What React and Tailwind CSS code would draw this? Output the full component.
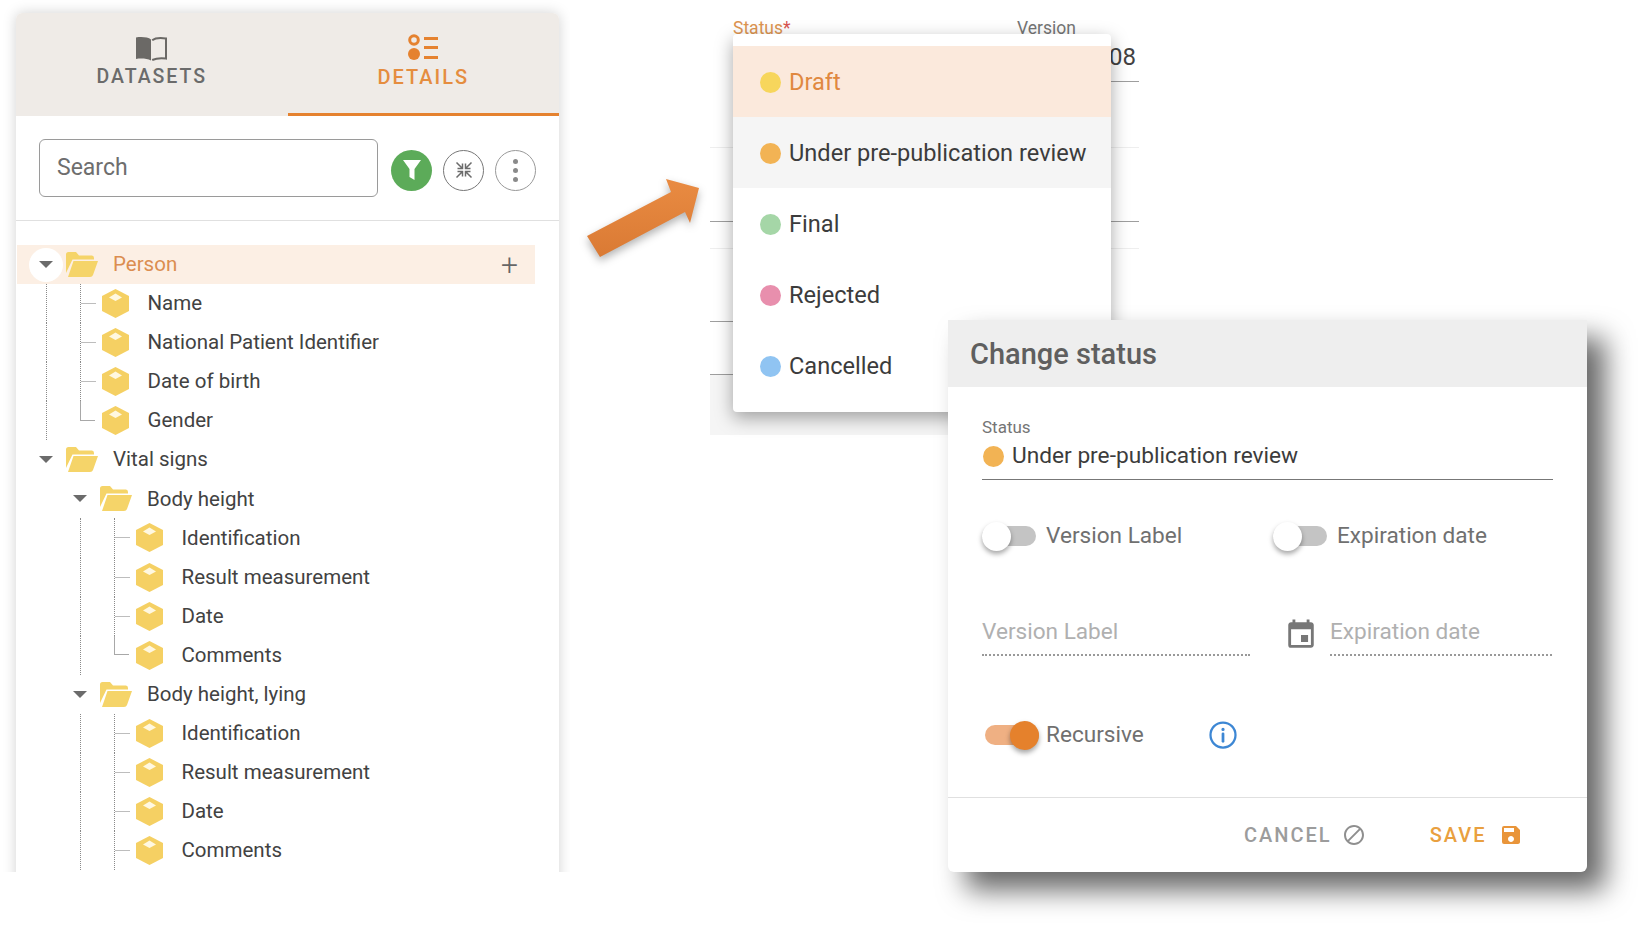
import { MdBlock, MdEvent, MdSave } from "react-icons/md"

const tree = [
    { label: "Person", kind: "folder", depth: 0, active: true },
    { label: "Name", kind: "leaf", guides: ["line", "elbow"] },
    { label: "National Patient Identifier", kind: "leaf", guides: ["line", "elbow"] },
    { label: "Date of birth", kind: "leaf", guides: ["line", "elbow"] },
    { label: "Gender", kind: "leaf", guides: ["line", "last"] },
    { label: "Vital signs", kind: "folder", depth: 0 },
    { label: "Body height", kind: "folder", depth: 1 },
    { label: "Identification", kind: "leaf", guides: ["none", "line", "elbow"] },
    { label: "Result measurement", kind: "leaf", guides: ["none", "line", "elbow"] },
    { label: "Date", kind: "leaf", guides: ["none", "line", "elbow"] },
    { label: "Comments", kind: "leaf", guides: ["none", "line", "last"] },
    { label: "Body height, lying", kind: "folder", depth: 1 },
    { label: "Identification", kind: "leaf", guides: ["none", "line", "elbow"] },
    { label: "Result measurement", kind: "leaf", guides: ["none", "line", "elbow"] },
    { label: "Date", kind: "leaf", guides: ["none", "line", "elbow"] },
    { label: "Comments", kind: "leaf", guides: ["none", "line", "elbow"] },
]

const statuses = [
    { label: "Draft", dot: "bg-[#f7d65c]", row: "bg-[#fbe9dc] text-[#e0883f]" },
    { label: "Under pre-publication review", dot: "bg-[#f2b354]", row: "bg-[#f5f5f5] text-[#3c3c3c]" },
    { label: "Final", dot: "bg-[#a5d6a7]", row: "text-[#3c3c3c]" },
    { label: "Rejected", dot: "bg-[#e88fad]", row: "text-[#3c3c3c]" },
    { label: "Cancelled", dot: "bg-[#90c4f2]", row: "text-[#3c3c3c]" },
]

function BookIcon() {
    return (
        <svg width="33" height="25" viewBox="0 0 33 25">
            <path d="M16 3.5C13 1 6 .5 1 1.5V23c5-1 11-.5 15 1.5z" fill="#6b6966" />
            <path d="M17.200 4.200C20 2 26 1.600 31 2.400V22.600C26 22 21 22.400 17.200 24" fill="none" stroke="#6b6966" strokeWidth="2" />
        </svg>
    )
}

function DetailsIcon() {
    return (
        <svg width="31" height="26" viewBox="0 0 31 26" fill="#e5822f">
            <circle cx="6" cy="6" r="4.300" fill="none" stroke="#e5822f" strokeWidth="3" />
            <circle cx="6" cy="20" r="6" />
            <rect x="16" y="3" width="14" height="3" />
            <rect x="16" y="12" width="14" height="3" />
            <rect x="16" y="22" width="14" height="3" />
        </svg>
    )
}

function FolderIcon() {
    return (
        <svg width="32" height="25" viewBox="0 0 32 25" fill="#f5d469">
            <path d="M0 2.500Q0 0 2.500 0H10l3 3.500h13Q28 3.500 28 6v1.500H6.500L0 21z" />
            <path d="M7.500 9H32l-5 14q-.6 2-3 2H2z" />
        </svg>
    )
}

function CubeIcon() {
    return (
        <svg width="27" height="29" viewBox="0 0 27 29">
            <path d="M13.500 0 27 7v15l-13.500 7L0 22V7z" fill="#f5d063" />
            <path d="M13.500 4.500 20 8.500l-6.500 3.500L7 8.500z" fill="#fff8e1" />
        </svg>
    )
}

function CollapseIcon() {
    return (
        <svg width="18" height="18" viewBox="0 0 18 18" fill="none" stroke="#6b6b6b" strokeWidth="1.500">
            <path d="M7.500 2.500v5h-5M1.500 1.500l6 6" />
            <path d="M10.500 2.500v5h5M16.500 1.500l-6 6" />
            <path d="M7.500 15.500v-5h-5M1.500 16.500l6-6" />
            <path d="M10.500 15.500v-5h5M16.500 16.500l-6-6" />
        </svg>
    )
}

function TreeGuide({ type }) {
    if (type === "none") return <div className="w-[34px] self-stretch" />
    if (type === "line") return <div className="w-[34px] self-stretch border-l border-dotted border-[#8a8a8a]" />
    if (type === "elbow") {
        return (
            <div className="w-[22px] self-stretch flex items-center border-l border-dotted border-[#8a8a8a]">
                <div className="w-[15px] h-px bg-[#bdbdbd]" />
            </div>
        )
    }
    return (
        <div className="w-[22px] self-stretch flex flex-col">
            <div className="h-1/2 w-[15px] border-l border-b border-[#a8a8a8]" />
        </div>
    )
}

function TreeRow({ item }) {
    if (item.kind === "leaf") {
        return (
            <div className="flex items-center h-[39.07px] pl-[29px]">
                {item.guides.map((guide, i) => <TreeGuide key={i} type={guide} />)}
                <CubeIcon />
                <span className="ml-[18.500px] text-[20.500px] text-[#424242]">{item.label}</span>
            </div>
        )
    }
    return (
        <div className={`flex items-center h-[39.07px] pl-[29px] mr-[24px] ${item.active ? "bg-[#fcefe4]" : ""}`}>
            {item.depth === 1 && <div className="w-[34px]" />}
            <div className={`-ml-[17px] w-[34px] h-[34px] rounded-full flex items-center justify-center shrink-0 ${item.active ? "bg-white" : ""}`}>
                <div className="w-0 h-0 border-x-[7px] border-x-transparent border-t-[7px] border-t-[#6b6b6b]" />
            </div>
            <div className="ml-[3px] flex"><FolderIcon /></div>
            <span className={`ml-[15px] text-[20.500px] ${item.active ? "text-[#db8d50]" : "text-[#424242]"}`}>{item.label}</span>
            {item.active && <span className="ml-auto mr-[17px] text-[30px] leading-none font-light text-[#666]">+</span>}
        </div>
    )
}

function DatasetPanel() {
    return (
        <div className="w-[570px] h-[872px] overflow-hidden pl-4 pt-[13px] shrink-0">
            <div className="w-[543px] h-[900px] bg-white rounded-t-md shadow-[0_0_14px_rgba(0,0,0,0.18)]">
                <div className="flex h-[103px] bg-[#efebe7] rounded-t-md">
                    <div className="flex-1 flex flex-col items-center pt-[23px]">
                        <BookIcon />
                        <span className="mt-[3px] text-[19.500px] leading-[26px] font-medium tracking-[2px] text-[#6b6b6b]">DATASETS</span>
                    </div>
                    <div className="flex-1 flex flex-col items-center pt-[21px] border-b-[3px] border-[#e5822f]">
                        <DetailsIcon />
                        <span className="mt-[4px] text-[20px] leading-[26px] font-medium tracking-[2px] text-[#e58d3f]">DETAILS</span>
                    </div>
                </div>
                <div className="flex items-center h-[105px] pt-[4px] pl-[23px] border-b border-[#e0e0e0]">
                    <input
                        className="w-[339px] h-[58px] border border-[#9a9a9a] rounded-md px-[17px] pb-[2px] text-[23px] outline-none placeholder-[#6e6e6e] -mt-[4px]"
                        placeholder="Search"
                    />
                    <button className="ml-[13px] w-[41px] h-[41px] rounded-full bg-[#5cab59] flex items-center justify-center">
                        <svg width="20" height="22" viewBox="0 0 20 22" fill="#fff"><path d="M1 1h18l-6.500 9v11l-5-3v-8z" /></svg>
                    </button>
                    <button className="ml-[11px] w-[41px] h-[41px] rounded-full border border-[#777] flex items-center justify-center">
                        <CollapseIcon />
                    </button>
                    <button className="ml-[11px] w-[41px] h-[41px] rounded-full border border-[#999] flex flex-col items-center justify-center gap-[4px]">
                        <span className="w-[5px] h-[5px] rounded-full bg-[#8a8a8a]" />
                        <span className="w-[5px] h-[5px] rounded-full bg-[#8a8a8a]" />
                        <span className="w-[5px] h-[5px] rounded-full bg-[#8a8a8a]" />
                    </button>
                </div>
                <div className="pt-[24px] pl-px">
                    {tree.map((item, i) => <TreeRow key={i} item={item} />)}
                </div>
            </div>
        </div>
    )
}

function BackgroundForm() {
    return (
        <div className="absolute left-[140px] top-0 w-[429px] h-[434px]">
            <div className="h-[82px] pt-[15px] border-b border-[#9e9e9e] ml-[23px]">
                <span className="text-[17.500px] text-[#dd9450]">Status<span className="text-[#d9534f]">*</span></span>
            </div>
            <div className="h-[66px] border-b border-[#eeeeee]" />
            <div className="h-[74px] border-b border-[#9e9e9e]" />
            <div className="h-[27px] border-b border-[#eeeeee]" />
            <div className="h-[73px] border-b border-[#9e9e9e]" />
            <div className="h-[53px] border-b border-[#9e9e9e]" />
            <div className="h-[60px] bg-[#f5f5f5]" />
        </div>
    )
}

function StatusMenu() {
    return (
        <div className="absolute left-[163px] top-[34px] w-[378px] h-[378px] pt-[12px] bg-white rounded-sm shadow-[0_6px_18px_rgba(0,0,0,0.35)]">
            {statuses.map((status) => (
                <div key={status.label} className={`flex items-center h-[71px] pl-[27px] pt-[2px] text-[23.600px] ${status.row}`}>
                    <span className={`w-[21px] h-[21px] rounded-full ${status.dot}`} />
                    <span className="ml-[8px]">{status.label}</span>
                </div>
            ))}
        </div>
    )
}

function Toggle({ on }) {
    return (
        <div className={`w-[54px] h-[20px] rounded-full flex items-center shrink-0 ${on ? "bg-[#efb083] justify-end" : "bg-[#c4c4c4]"}`}>
            <span className={`w-[29px] h-[29px] rounded-full shrink-0 shadow-[0_3px_5px_rgba(0,0,0,0.35)] ${on ? "bg-[#e5812c]" : "bg-white"}`} />
        </div>
    )
}

function ChangeStatusDialog() {
    return (
        <div className="absolute left-[378px] top-[320px] w-[639px] h-[552px] bg-white rounded-b-md shadow-[18px_18px_28px_rgba(0,0,0,0.6)] flex flex-col">
            <div className="h-[67px] bg-[#eeeeee] flex items-center pl-[22px] pt-[3px] text-[29px] font-medium text-[#5f5f5f]">Change status</div>
            <div className="flex-1 px-[34px]">
                <div className="pt-[30px] h-[93px] border-b border-[#777] w-[571px]">
                    <div className="text-[17px] leading-[20px] text-[#757575]">Status</div>
                    <div className="flex items-center mt-[5px] text-[22.700px] leading-[28px] text-[#3c3c3c]">
                        <span className="w-[21px] h-[21px] rounded-full bg-[#f2b354] mr-[8px] ml-px" />
                        Under pre-publication review
                    </div>
                </div>
                <div className="flex items-center mt-[38px] h-[36px] text-[22.600px] text-[#707070]">
                    <Toggle />
                    <span className="ml-[10px] w-[227px]">Version Label</span>
                    <Toggle />
                    <span className="ml-[10px]">Expiration date</span>
                </div>
                <div className="flex mt-[49px] text-[22.600px] text-[#b0b0b0]">
                    <div className="w-[268px] h-[53px] border-b-2 border-dotted border-[#999] pt-[12px]">Version Label</div>
                    <div className="w-[80px] pl-[34px] pt-[15px] text-[#777]"><MdEvent size={34} /></div>
                    <div className="w-[222px] h-[53px] border-b-2 border-dotted border-[#999] pt-[12px]">Expiration date</div>
                </div>
                <div className="flex items-center mt-[61px] h-[36px] pl-[3px] text-[22.600px] text-[#707070]">
                    <Toggle on />
                    <span className="ml-[7px]">Recursive</span>
                    <svg className="ml-[64px]" width="30" height="30" viewBox="0 0 24 24" fill="none" stroke="#3d87d4" strokeWidth="1.800" strokeLinecap="round">
                        <circle cx="12" cy="12" r="10" />
                        <path d="M12 11v6" strokeWidth="2.200" />
                        <circle cx="12" cy="7.500" r=".6" strokeWidth="1.400" />
                    </svg>
                </div>
            </div>
            <div className="h-[75px] border-t border-[#e0e0e0] flex items-center pl-[296px] text-[20px] font-medium tracking-[2px]">
                <span className="text-[#9c9c9c]">CANCEL</span>
                <MdBlock className="ml-[10px] text-[#8f8f8f]" size={24} />
                <span className="ml-[64px] text-[#e9a03f]">SAVE</span>
                <MdSave className="ml-[13px] text-[#e9953a]" size={24} />
            </div>
        </div>
    )
}

export default function App() {
    return (
        <div className="flex w-[1650px] h-[934px] bg-white overflow-hidden font-['Roboto',sans-serif]">
            <DatasetPanel />
            <div className="relative flex-1">
                <BackgroundForm />
                <span className="absolute left-[447px] top-[15px] text-[17.500px] text-[#757575]">Version</span>
                <span className="absolute left-[539px] top-[39px] text-[24px] text-[#424242]">08</span>
                <svg className="absolute left-[17px] top-[173px] drop-shadow-[0_4px_4px_rgba(0,0,0,0.3)]" width="120" height="90" viewBox="586 172 120 90">
                    <defs>
                        <linearGradient id="arrowFill" x1="0" y1="0" x2="0" y2="1">
                            <stop offset="0" stopColor="#e98b42" />
                            <stop offset="1" stopColor="#da7a34" />
                        </linearGradient>
                    </defs>
                    <polygon points="586,235 670,191 665,178 698,187 689,222 684,211 599,256" fill="url(#arrowFill)" />
                </svg>
                <StatusMenu />
                <ChangeStatusDialog />
            </div>
        </div>
    )
}
